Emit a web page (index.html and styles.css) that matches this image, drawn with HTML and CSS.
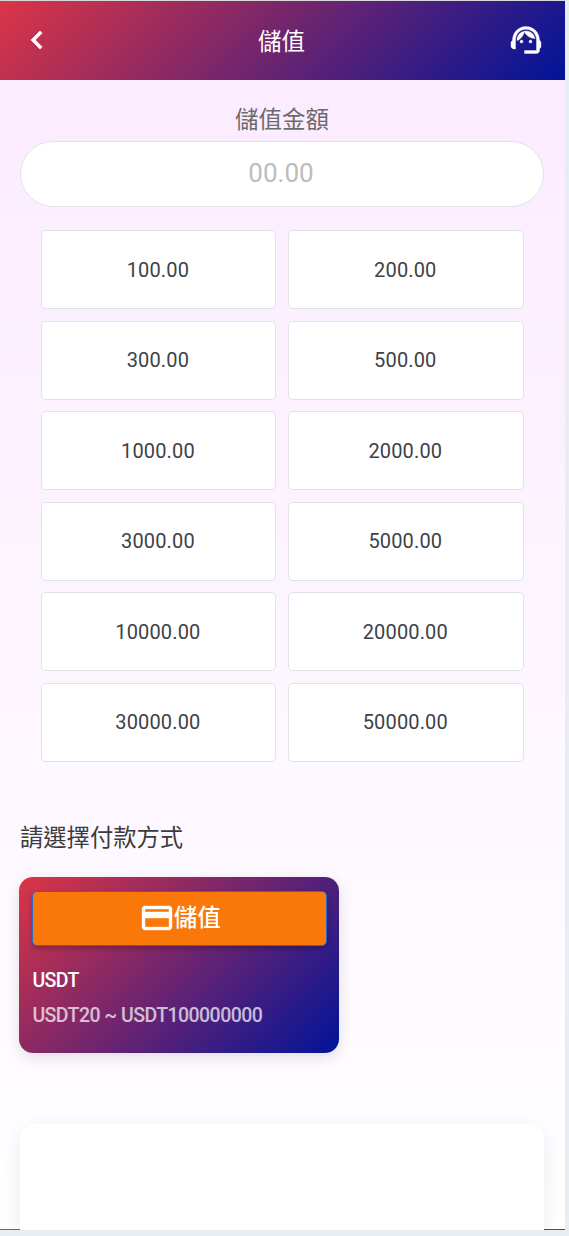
FILE: index.html
```html
<!DOCTYPE html>
<html lang="zh-Hant">
<head>
<meta charset="utf-8">
<title>儲值</title>
<link rel="stylesheet" href="styles.css">
</head>
<body>
<div class="app">
  <header class="header">
    <svg class="icon back" viewBox="0 0 24 24"><path d="M15.41 7.41 14 6l-6 6 6 6 1.41-1.41L10.83 12z"/></svg>
    <h1 class="title">儲值</h1>
    <svg class="icon support" viewBox="0 0 24 24"><path d="M21 12.22C21 6.73 16.74 3 12 3c-4.69 0-9 3.65-9 9.28-.6.34-1 .98-1 1.72v2c0 1.1.9 2 2 2h1v-6.1c0-3.87 3.13-7 7-7s7 3.13 7 7V19h-8v2h8c1.1 0 2-.9 2-2v-1.22c.59-.31 1-.92 1-1.64v-2.3c0-.7-.41-1.31-1-1.62z"/><circle cx="9" cy="13" r="1"/><circle cx="15" cy="13" r="1"/><path d="M18 11.03C17.52 8.18 15.04 6 12.05 6c-3.03 0-6.29 2.51-6.03 6.45 2.47-1.01 4.33-3.21 4.86-5.89 1.31 2.63 4 4.44 7.12 4.47z"/></svg>
  </header>
  <main class="content">
    <label class="label" for="amount">儲值金額</label>
    <input class="amount" id="amount" type="text" placeholder="00.00">
    <div class="grid">
      <button class="option">100.00</button>
      <button class="option">200.00</button>
      <button class="option">300.00</button>
      <button class="option">500.00</button>
      <button class="option">1000.00</button>
      <button class="option">2000.00</button>
      <button class="option">3000.00</button>
      <button class="option">5000.00</button>
      <button class="option">10000.00</button>
      <button class="option">20000.00</button>
      <button class="option">30000.00</button>
      <button class="option">50000.00</button>
    </div>
    <h2 class="heading">請選擇付款方式</h2>
    <section class="method">
      <button class="pay"><svg class="icon card" viewBox="0 0 24 24"><path d="M20 4H4c-1.11 0-1.99.89-1.99 2L2 18c0 1.11.89 2 2 2h16c1.11 0 2-.89 2-2V6c0-1.11-.89-2-2-2zm0 14H4v-6h16v6zm0-10H4V6h16v2z"/></svg><span>儲值</span></button>
      <p class="currency">USDT</p>
      <p class="range">USDT20 ~ USDT100000000</p>
    </section>
    <section class="panel"></section>
  </main>
</div>
</body>
</html>
```
FILE: styles.css
```css
* { box-sizing: border-box; margin: 0; }
body {
  background: #e8edf4;
  font-family: Roboto, "Noto Sans CJK TC", sans-serif;
  height: 1236px;
  overflow: hidden;
}
.app {
  width: 565px;
  height: 1230px;
  border-top: 1px solid #d9d9dc;
  overflow: hidden;
  background: linear-gradient(90deg, #dc3545, #8c2d60);
}
.header {
  height: 78.5px;
  padding: 0 20.5px 0 19.3px;
  display: flex;
  align-items: center;
  justify-content: space-between;
  background: linear-gradient(135deg, #dc3545, #001499);
  color: #fff;
}
.icon {
  width: 36px;
  height: 36px;
  fill: currentColor;
  stroke: currentColor;
  stroke-width: .25;
  flex: none;
  display: block;
}
.back { stroke-width: .5; }
.title { font-size: 23.5px; font-weight: 400; line-height: 36px; padding: 3px 1px 0 0; }
.content {
  height: 1149.5px;
  padding: 22px 21px 0 20px;
  background: linear-gradient(180deg, #fbecff, #ffffff) 0 0 / 100% 1149px no-repeat;
}
.label {
  display: block;
  height: 39px;
  line-height: 36px;
  font-size: 23.5px;
  text-align: center;
  color: #6b6b6b;
}
.amount {
  display: block;
  width: 100%;
  height: 66px;
  border: 1px solid #dfe3e9;
  border-radius: 33px;
  background: #fff;
  font: 26px Roboto, sans-serif;
  text-align: center;
  padding: 0 2px 1px 0;
  outline: none;
}
.amount::placeholder { color: #bcbcbc; opacity: 1; }
.grid {
  display: grid;
  grid-template-columns: 1fr 1fr;
  grid-auto-rows: 79px;
  gap: 11.6px;
  margin: 23.5px 20.3px 0 20.5px;
}
.option {
  border: 1px solid #dfe3e9;
  border-radius: 5px;
  background: #fff;
  color: #3c4248;
  font: 20px Roboto, sans-serif;
  letter-spacing: .15px;
  padding: 0 1px 0 0;
}
.heading {
  margin-top: 58px;
  font-size: 23.3px;
  font-weight: 400;
  line-height: 36px;
  color: #3b3b3b;
}
.method {
  width: 320px;
  height: 176px;
  margin: 21px 0 0 -.6px;
  padding: 14px 12.5px 0 13px;
  border-radius: 14px;
  background: linear-gradient(135deg, #dc3545, #001499);
  box-shadow: 0 5px 15px rgba(0, 0, 0, .12);
  color: #fff;
  font-weight: 500;
}
.pay {
  width: 100%;
  height: 55px;
  display: flex;
  align-items: center;
  justify-content: center;
  border: 1px solid #286bc8;
  border-radius: 5px;
  background: #fa780a;
  box-shadow: 0 3px 5px rgba(0, 0, 0, .22);
  color: #fff;
  font: 500 23.5px/36px Roboto, "Noto Sans CJK TC", sans-serif;
}
.card { margin-right: -1px; }
.currency, .range {
  font-size: 19.5px;
  line-height: 35px;
  letter-spacing: -.55px;
  white-space: nowrap;
}
.currency { margin-top: 17px; }
.range { opacity: .7; }
.panel {
  height: 107px;
  margin-top: 71px;
  border-radius: 15px 15px 0 0;
  background: #fff;
  box-shadow: 0 5px 20px rgba(0, 0, 0, .08);
  clip-path: inset(-30px -30px 0 -30px);
}
```
